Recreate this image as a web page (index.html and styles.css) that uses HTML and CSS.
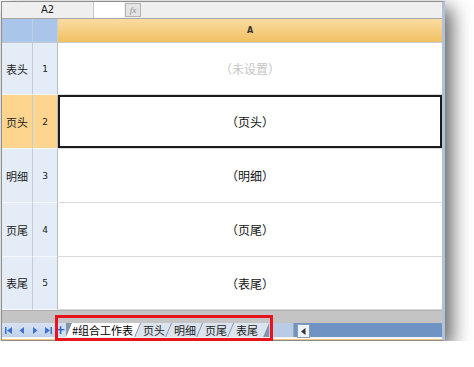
FILE: index.html
```html
<!DOCTYPE html>
<html lang="zh-CN">
<head>
    <meta charset="UTF-8">
    <title>组合工作表</title>
    <link rel="stylesheet" href="styles.css">
</head>
<body>
    <div class="window">
        <!-- Formula bar -->
        <div class="formula-bar">
            <div class="name-box">A2</div>
            <div class="formula-input"></div>
            <div class="fx-btn">fx</div>
            <div class="formula-rest"></div>
        </div>

        <!-- Sheet grid -->
        <div class="grid">
            <div class="corner"></div>
            <div class="corner"></div>
            <div class="col-head">A</div>

            <div class="row-name">表头</div>
            <div class="row-num">1</div>
            <div class="cell placeholder">（未设置）</div>

            <div class="row-name selected">页头</div>
            <div class="row-num selected">2</div>
            <div class="cell active">（页头）</div>

            <div class="row-name">明细</div>
            <div class="row-num">3</div>
            <div class="cell">（明细）</div>

            <div class="row-name">页尾</div>
            <div class="row-num">4</div>
            <div class="cell">（页尾）</div>

            <div class="row-name">表尾</div>
            <div class="row-num">5</div>
            <div class="cell">（表尾）</div>
        </div>

        <div class="sheet-bottom"></div>

        <!-- Sheet tabs -->
        <div class="tab-bar">
            <div class="tab-nav">
                <svg width="8" height="7" viewBox="0 0 8 7"><rect x="0" y="0" width="1.5" height="7"/><polygon points="7,0 7,7 2,3.5"/></svg>
                <svg width="6" height="7" viewBox="0 0 6 7"><polygon points="5,0 5,7 0.5,3.5"/></svg>
                <svg width="6" height="7" viewBox="0 0 6 7"><polygon points="1,0 1,7 5.5,3.5"/></svg>
                <svg width="8" height="7" viewBox="0 0 8 7"><polygon points="1,0 1,7 6,3.5"/><rect x="6.5" y="0" width="1.5" height="7"/></svg>
            </div>
            <div class="tab-add">+</div>
            <div class="tabs">
                <div class="tab current">#组合工作表</div>
                <div class="tab">页头</div>
                <div class="tab">明细</div>
                <div class="tab">页尾</div>
                <div class="tab">表尾</div>
            </div>
            <div class="tab-filler"></div>
            <div class="hscroll-btn">
                <svg width="5" height="7" viewBox="0 0 5 7"><polygon points="4.5,0 4.5,7 0,3.5"/></svg>
            </div>
            <div class="hscroll-track"></div>
        </div>
        <div class="status-line"></div>

        <!-- Highlight around the tabs -->
        <div class="highlight-box"></div>
    </div>
</body>
</html>
```

FILE: styles.css
```css
/* General */
body {
    margin: 0;
    background: #ffffff;
    font-family: "Noto Sans CJK SC", "DejaVu Sans", sans-serif;
}

.window {
    position: relative;
    margin: 1px 0 0 1px;
    width: 440px;
    border: 1px solid #8e8e8e;
    border-right: 3px solid #b0c2da;
    background: #ffffff;
    box-shadow: 7px 7px 18px rgba(0, 0, 0, 0.62);
}

/* Formula bar */
.formula-bar {
    display: flex;
    height: 16px;
    background: #efefef;
    border-bottom: 1px solid #a6a6a6;
}

.name-box {
    width: 91px;
    font-family: "DejaVu Sans", sans-serif;
    font-size: 10px;
    line-height: 16px;
    text-align: center;
    color: #222;
    border-right: 1px solid #c8c8c8;
}

.formula-input {
    width: 30px;
    background: #ffffff;
}

.fx-btn {
    width: 14px;
    height: 12px;
    margin: 1px 0 0 1px;
    border: 1px solid #b4b4b4;
    background: #e4e4e4;
    font-family: "Liberation Serif", serif;
    font-style: italic;
    font-size: 9px;
    line-height: 12px;
    text-align: center;
    color: #8a8a8a;
}

.formula-rest {
    flex: 1;
}

/* Grid */
.grid {
    display: grid;
    grid-template-columns: 31px 25px 1fr;
    grid-template-rows: 24px 52px 54px 54px 54px 53px;
}

.grid > div {
    box-sizing: border-box;
    display: flex;
    align-items: center;
    justify-content: center;
}

.corner {
    background: #a9c5ea;
    border-right: 1px solid #c3cfdf;
    border-bottom: 1px solid #c3cad4;
}

.col-head {
    background: linear-gradient(#f9dca2, #f2c162);
    border-bottom: 1px solid #c3cad4;
    font-family: "DejaVu Sans", sans-serif;
    font-size: 8px;
    font-weight: bold;
    color: #333;
}

.row-name,
.row-num {
    background: #e4ecf7;
    border-right: 1px solid #c3cbd6;
    border-bottom: 1px solid #f4f7fb;
    color: #222;
}

.row-name {
    font-size: 11px;
}

.row-num {
    font-family: "DejaVu Sans", sans-serif;
    font-size: 9px;
    border-right-color: #b8bcc2;
}

.row-name.selected,
.row-num.selected {
    background: #fed58e;
}

.cell {
    border-bottom: 1px solid #dadada;
    font-size: 12px;
    color: #111;
}

.cell.placeholder {
    color: #c4c4c4;
}

.cell.active {
    box-shadow: inset 0 0 0 2px #1c1c1c;
}

.sheet-bottom {
    height: 12px;
    background: #c4c4c4;
    border-top: 1px solid #b0b0b0;
}

/* Sheet tabs */
.tab-bar {
    display: flex;
    height: 14px;
    background: #6f94c4;
}

.tab-nav {
    display: flex;
    align-items: center;
    justify-content: space-around;
    width: 53px;
    background: linear-gradient(#d6e2f2, #bfd1ea);
    fill: #3f72d0;
}

.tab-add {
    width: 11px;
    background: #d3dff0;
    color: #2a5fd0;
    font-family: "DejaVu Sans", sans-serif;
    font-size: 12px;
    font-weight: bold;
    line-height: 14px;
    text-align: center;
}

.tabs {
    display: flex;
    background: #8494aa;
}

.tab {
    margin-left: -5px;
    padding: 0 6px 0 8px;
    background: #dbe3ee;
    font-size: 11px;
    line-height: 14px;
    color: #222;
    clip-path: polygon(0 100%, 6px 0, 100% 0, calc(100% - 6px) 100%);
}

.tab:first-child {
    margin-left: 0;
}

.tab.current {
    padding: 0 7px 0 6px;
    background: #ffffff;
    color: #000;
}

.tab:last-child {
    padding-right: 11px;
}

.tab-filler {
    width: 24px;
    background: #b9cce5;
    border-right: 1px solid #9aa8b8;
}

.hscroll-btn {
    display: flex;
    align-items: center;
    justify-content: center;
    width: 11px;
    height: 12px;
    margin: 1px 2px 0 3px;
    background: #eef3f9;
    border: 1px solid #8a9cb4;
    fill: #333;
}

.hscroll-track {
    flex: 1;
}

.status-line {
    height: 1px;
    border-top: 1px solid #eef2f8;
    border-bottom: 1px solid #f5c27e;
}

/* Red frame laid over the tabs */
.highlight-box {
    position: absolute;
    left: 53px;
    top: 313px;
    width: 212px;
    height: 20px;
    border: 3px solid #e8141c;
}
```
